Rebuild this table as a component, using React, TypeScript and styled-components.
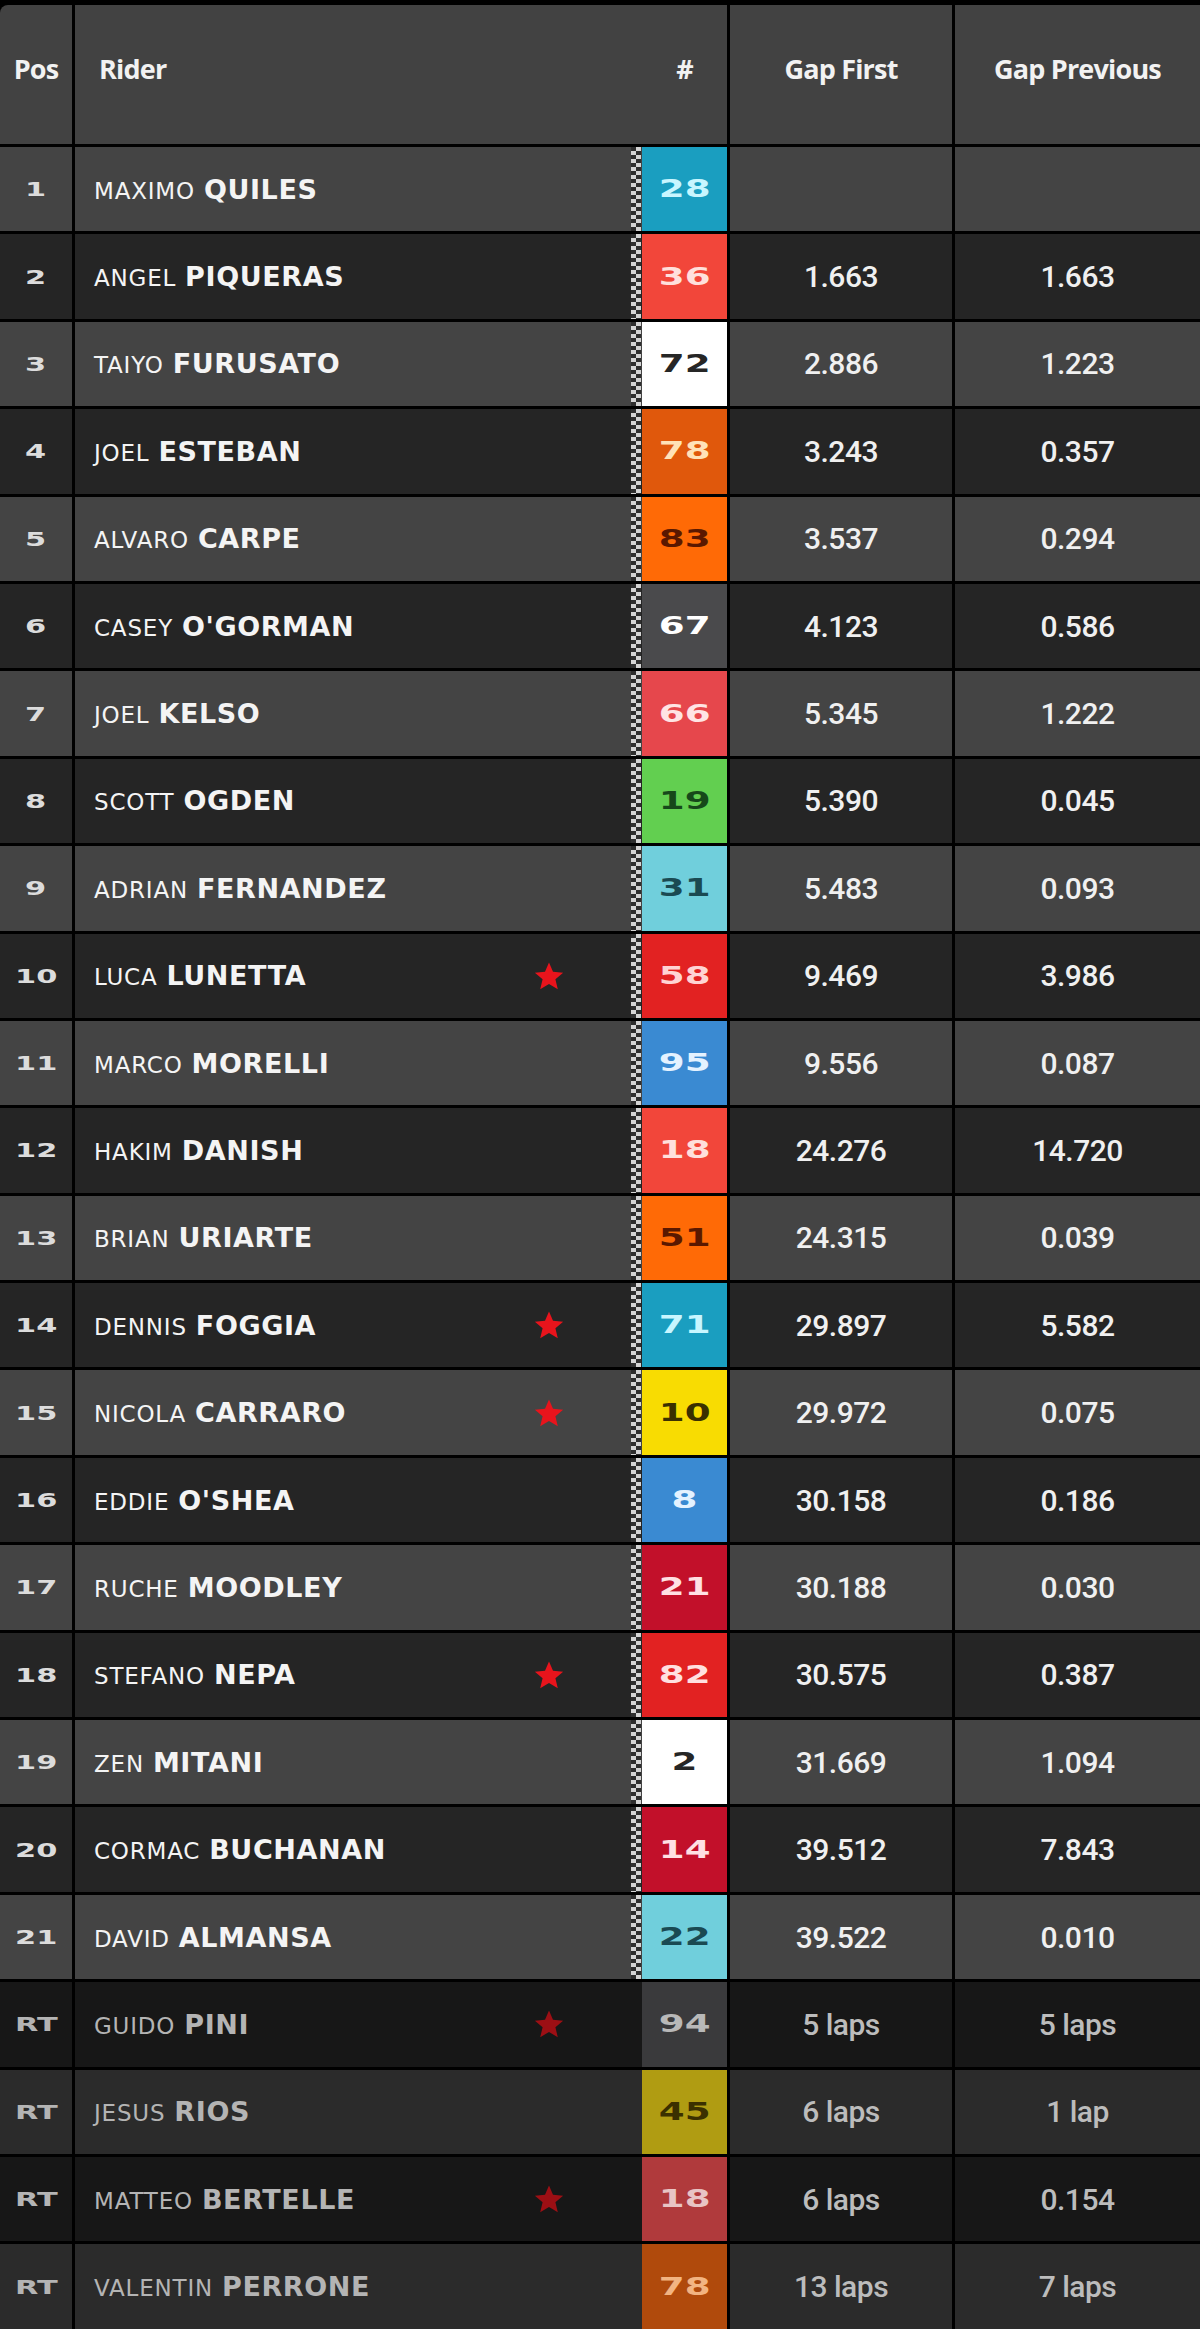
import React from "react";
import styled, { createGlobalStyle } from "styled-components";

const GlobalStyle = createGlobalStyle`
  body {
    margin: 0;
    background: #000;
  }
`;

type Rider = {
  pos: string;
  first: string;
  last: string;
  num: string;
  bg: string;
  fg: string;
  gapFirst: string;
  gapPrev: string;
  star?: boolean;
  rt?: boolean;
};

const riders: Rider[] = [
  { pos: "1", first: "MAXIMO", last: "QUILES", num: "28", bg: "#1a9ec0", fg: "#c8f6ff", gapFirst: "", gapPrev: "" },
  { pos: "2", first: "ANGEL", last: "PIQUERAS", num: "36", bg: "#f2463a", fg: "#ffe0dc", gapFirst: "1.663", gapPrev: "1.663" },
  { pos: "3", first: "TAIYO", last: "FURUSATO", num: "72", bg: "#ffffff", fg: "#262626", gapFirst: "2.886", gapPrev: "1.223" },
  { pos: "4", first: "JOEL", last: "ESTEBAN", num: "78", bg: "#e0580c", fg: "#ffe2b8", gapFirst: "3.243", gapPrev: "0.357" },
  { pos: "5", first: "ALVARO", last: "CARPE", num: "83", bg: "#ff6a06", fg: "#5a1800", gapFirst: "3.537", gapPrev: "0.294" },
  { pos: "6", first: "CASEY", last: "O'GORMAN", num: "67", bg: "#4a4a4c", fg: "#ffffff", gapFirst: "4.123", gapPrev: "0.586" },
  { pos: "7", first: "JOEL", last: "KELSO", num: "66", bg: "#e6474c", fg: "#ffe4e4", gapFirst: "5.345", gapPrev: "1.222" },
  { pos: "8", first: "SCOTT", last: "OGDEN", num: "19", bg: "#62cf50", fg: "#16481a", gapFirst: "5.390", gapPrev: "0.045" },
  { pos: "9", first: "ADRIAN", last: "FERNANDEZ", num: "31", bg: "#70cfdc", fg: "#1a4a52", gapFirst: "5.483", gapPrev: "0.093" },
  { pos: "10", first: "LUCA", last: "LUNETTA", num: "58", bg: "#e22222", fg: "#ffd4d4", gapFirst: "9.469", gapPrev: "3.986", star: true },
  { pos: "11", first: "MARCO", last: "MORELLI", num: "95", bg: "#3a8ad2", fg: "#e4f2ff", gapFirst: "9.556", gapPrev: "0.087" },
  { pos: "12", first: "HAKIM", last: "DANISH", num: "18", bg: "#f2463a", fg: "#ffe0dc", gapFirst: "24.276", gapPrev: "14.720" },
  { pos: "13", first: "BRIAN", last: "URIARTE", num: "51", bg: "#ff6a06", fg: "#5a1800", gapFirst: "24.315", gapPrev: "0.039" },
  { pos: "14", first: "DENNIS", last: "FOGGIA", num: "71", bg: "#1a9ec0", fg: "#c8f6ff", gapFirst: "29.897", gapPrev: "5.582", star: true },
  { pos: "15", first: "NICOLA", last: "CARRARO", num: "10", bg: "#f8dc02", fg: "#3a3000", gapFirst: "29.972", gapPrev: "0.075", star: true },
  { pos: "16", first: "EDDIE", last: "O'SHEA", num: "8", bg: "#3a8ad2", fg: "#e4f2ff", gapFirst: "30.158", gapPrev: "0.186" },
  { pos: "17", first: "RUCHE", last: "MOODLEY", num: "21", bg: "#c2102a", fg: "#ffe0e4", gapFirst: "30.188", gapPrev: "0.030" },
  { pos: "18", first: "STEFANO", last: "NEPA", num: "82", bg: "#e22222", fg: "#ffe0e0", gapFirst: "30.575", gapPrev: "0.387", star: true },
  { pos: "19", first: "ZEN", last: "MITANI", num: "2", bg: "#ffffff", fg: "#262626", gapFirst: "31.669", gapPrev: "1.094" },
  { pos: "20", first: "CORMAC", last: "BUCHANAN", num: "14", bg: "#c2102a", fg: "#ffe0e4", gapFirst: "39.512", gapPrev: "7.843" },
  { pos: "21", first: "DAVID", last: "ALMANSA", num: "22", bg: "#70cfdc", fg: "#1a4a52", gapFirst: "39.522", gapPrev: "0.010" },
  { pos: "RT", first: "GUIDO", last: "PINI", num: "94", bg: "#3a3a3c", fg: "#b8b8b8", gapFirst: "5 laps", gapPrev: "5 laps", star: true, rt: true },
  { pos: "RT", first: "JESUS", last: "RIOS", num: "45", bg: "#b09c12", fg: "#3a3000", gapFirst: "6 laps", gapPrev: "1 lap", rt: true },
  { pos: "RT", first: "MATTEO", last: "BERTELLE", num: "18", bg: "#b03a3c", fg: "#e8c4c4", gapFirst: "6 laps", gapPrev: "0.154", star: true, rt: true },
  { pos: "RT", first: "VALENTIN", last: "PERRONE", num: "78", bg: "#b04a0c", fg: "#f2b482", gapFirst: "13 laps", gapPrev: "7 laps", rt: true },
];

const tones: Record<string, string> = {
  light: "#444444",
  dark: "#252525",
  rtLight: "#2b2b2b",
  rtDark: "#171717",
};

const Table = styled.div`
  display: grid;
  row-gap: 3px;
  padding-top: 5px;
  background: #000;
  width: 1200px;
`;

const Row = styled.div<{ $bg: string; $height: number }>`
  --row-bg: ${(p) => p.$bg};
  display: grid;
  grid-template-columns: 72px 652px 222px 1fr;
  column-gap: 3px;
  height: ${(p) => p.$height}px;
`;

const Cell = styled.div`
  background: var(--row-bg);
  display: flex;
  align-items: center;
  min-width: 0;
`;

const PosCell = styled(Cell)<{ $corner?: boolean }>`
  justify-content: center;
  border-top-left-radius: ${(p) => (p.$corner ? "8px" : "0")};
`;

const HeadCell = styled(Cell)`
  padding-bottom: 12px;
`;

const PosText = styled.span<{ $dim?: boolean }>`
  font-family: "DejaVu Sans", sans-serif;
  font-weight: 700;
  font-size: 19px;
  color: ${(p) => (p.$dim ? "#b4b4b4" : "#dcdcdc")};
  display: inline-block;
  transform: scaleX(1.6);
`;

const HeadLabel = styled.span`
  font-family: "Open Sans", sans-serif;
  font-weight: 700;
  font-size: 27px;
  letter-spacing: -0.8px;
  color: #f2f2f2;
`;

const HeadPos = styled(HeadCell)`
  justify-content: center;
  border-top-left-radius: 8px;
`;

const RiderHead = styled(HeadCell)`
  padding-left: 24px;
`;

const HeadGrow = styled.div`
  flex: 1;
`;

const HashHead = styled.div`
  width: 85px;
  text-align: center;
`;

const HeadCenter = styled(HeadCell)`
  justify-content: center;
`;

const CenterCell = styled(Cell)`
  justify-content: center;
`;

const RiderCell = styled(Cell)`
  padding-left: 19px;
  align-items: stretch;
`;

const Name = styled.div<{ $dim?: boolean }>`
  flex: 1;
  display: flex;
  align-items: baseline;
  align-self: center;
  gap: 9px;
  color: ${(p) => (p.$dim ? "#b4b4b4" : "#f4f4f4")};
  white-space: nowrap;
`;

const First = styled.span`
  font-family: "DejaVu Sans", sans-serif;
  font-size: 23px;
  letter-spacing: 0.8px;
`;

const Last = styled.span`
  font-family: "DejaVu Sans", sans-serif;
  font-weight: 700;
  font-size: 27px;
  letter-spacing: 0.6px;
`;

const StarBox = styled.div`
  width: 34px;
  margin-right: 64px;
  display: flex;
  align-items: center;
  justify-content: center;
`;

const Flag = styled.div<{ $show: boolean }>`
  width: 10px;
  margin: 0 1px;
  background-image: ${(p) =>
    p.$show
      ? "conic-gradient(#d4d4d4 0 90deg, #2e2e2e 90deg 180deg, #d4d4d4 180deg 270deg, #2e2e2e 270deg)"
      : "none"};
  background-size: 10px 8px;
`;

const NumBox = styled.div<{ $bg: string; $fg: string }>`
  width: 85px;
  background: ${(p) => p.$bg};
  color: ${(p) => p.$fg};
  display: flex;
  align-items: center;
  justify-content: center;
`;

const NumText = styled.span`
  font-family: "DejaVu Sans", sans-serif;
  font-weight: 700;
  font-size: 24px;
  display: inline-block;
  transform: scaleX(1.55);
`;

const Gap = styled.span<{ $dim?: boolean }>`
  font-family: Roboto, sans-serif;
  font-weight: 500;
  font-size: 30px;
  letter-spacing: -0.5px;
  color: ${(p) => (p.$dim ? "#bcbcbc" : "#f0f0f0")};
`;

const Star = ({ dim }: { dim?: boolean }) => (
  <svg width="32" height="32" viewBox="0 0 24 24">
    <path
      d="M12 1.8l3 7.1 7.6.6-5.8 5 1.8 7.5L12 18l-6.6 4 1.8-7.5-5.8-5 7.6-.6z"
      fill={dim ? "#9c0f14" : "#e8141c"}
    />
  </svg>
);

const ROW_H = 84.4;

export default function App() {
  return (
    <>
      <GlobalStyle />
      <Table>
        <Row $bg="#424242" $height={139}>
          <HeadPos>
            <HeadLabel>Pos</HeadLabel>
          </HeadPos>
          <RiderHead>
            <HeadGrow>
              <HeadLabel>Rider</HeadLabel>
            </HeadGrow>
            <HashHead>
              <HeadLabel>#</HeadLabel>
            </HashHead>
          </RiderHead>
          <HeadCenter>
            <HeadLabel>Gap First</HeadLabel>
          </HeadCenter>
          <HeadCenter>
            <HeadLabel>Gap Previous</HeadLabel>
          </HeadCenter>
        </Row>
        {riders.map((r, i) => {
          const light = i % 2 === 0;
          const tone = r.rt ? (light ? "rtLight" : "rtDark") : light ? "light" : "dark";
          return (
            <Row key={i} $bg={tones[tone]} $height={ROW_H}>
              <PosCell>
                <PosText $dim={r.rt}>{r.pos}</PosText>
              </PosCell>
              <RiderCell>
                <Name $dim={r.rt}>
                  <First>{r.first}</First>
                  <Last>{r.last}</Last>
                </Name>
                <StarBox>{r.star && <Star dim={r.rt} />}</StarBox>
                <Flag $show={!r.rt} />
                <NumBox $bg={r.bg} $fg={r.fg}>
                  <NumText>{r.num}</NumText>
                </NumBox>
              </RiderCell>
              <CenterCell>
                <Gap $dim={r.rt}>{r.gapFirst}</Gap>
              </CenterCell>
              <CenterCell>
                <Gap $dim={r.rt}>{r.gapPrev}</Gap>
              </CenterCell>
            </Row>
          );
        })}
      </Table>
    </>
  );
}
